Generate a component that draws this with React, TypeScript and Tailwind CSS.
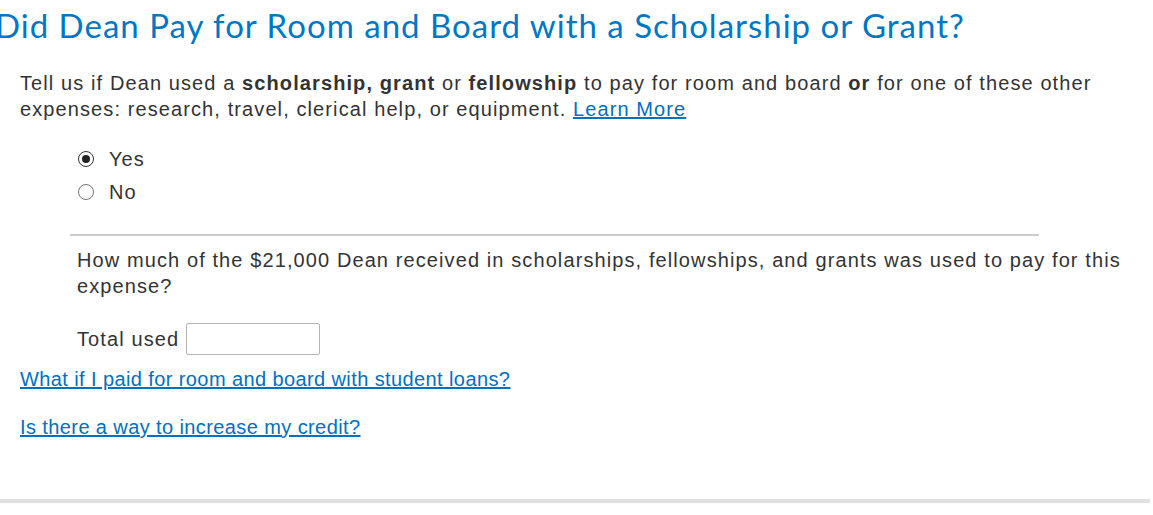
import { useState } from "react";

function Radio({ label, checked, onSelect }: { label: string; checked: boolean; onSelect: () => void }) {
  return (
    <label className="flex items-center gap-[15px] h-[33px] cursor-pointer" onClick={onSelect}>
      <span
        className={`w-[16px] h-[16px] rounded-full border flex items-center justify-center bg-white ${
          checked ? "border-[#333]" : "border-[#767676]"
        }`}
      >
        {checked && <span className="w-[8px] h-[8px] rounded-full bg-[#222]" />}
      </span>
      <span className="text-[20px] tracking-[1px] text-[#333]">{label}</span>
    </label>
  );
}

export default function App() {
  const [answer, setAnswer] = useState("yes");

  return (
    <div className="w-[1153px] h-[515px] bg-white overflow-hidden relative font-['Liberation_Sans',Arimo,Arial,sans-serif]">
      <h1 className="font-['Lato',sans-serif] text-[33px] leading-[40px] tracking-[1px] text-[#0077c5] ml-[-5px] pt-[5px] whitespace-nowrap">
        Did Dean Pay for Room and Board with a Scholarship or Grant?
      </h1>

      <p className="ml-[20px] mt-[25px] mr-[30px] text-[20px] leading-[26px] tracking-[1.1px] text-[#333]">
        Tell us if Dean used a <b>scholarship, grant</b> or <b>fellowship</b> to pay for room and board <b>or</b> for
        one of these other expenses: research, travel, clerical help, or equipment.{" "}
        <a href="#" className="text-[#0070c0] underline">
          Learn More
        </a>
      </p>

      <div className="ml-[78px] mt-[20px] flex flex-col">
        <Radio label="Yes" checked={answer === "yes"} onSelect={() => setAnswer("yes")} />
        <Radio label="No" checked={answer === "no"} onSelect={() => setAnswer("no")} />
      </div>

      <div className="ml-[70px] w-[969px] mt-[26px] border-t-2 border-[#cccccc]" />

      <p className="ml-[77px] mr-[20px] mt-[11px] text-[20px] leading-[26px] tracking-[1.1px] text-[#333]">
        How much of the $21,000 Dean received in scholarships, fellowships, and grants was used to pay for this
        expense?
      </p>

      <div className="ml-[77px] mt-[24px] flex items-center gap-[7px]">
        <span className="text-[20px] tracking-[1.1px] text-[#333]">Total used</span>
        <input
          type="text"
          className="w-[134px] h-[32px] border border-[#b5b5b5] rounded-[2px] px-2 text-[18px] outline-none"
        />
      </div>

      <div className="ml-[20px] mt-[11px] flex flex-col gap-[22px] text-[20px] leading-[26px] tracking-[0.4px]">
        <a href="#" className="text-[#0070c0] underline w-fit">
          What if I paid for room and board with student loans?
        </a>
        <a href="#" className="text-[#0070c0] underline w-fit">
          Is there a way to increase my credit?
        </a>
      </div>

      <div className="absolute left-0 top-[499px] w-[1150px] h-[4px] bg-[#e0e0e0]" />
    </div>
  );
}
